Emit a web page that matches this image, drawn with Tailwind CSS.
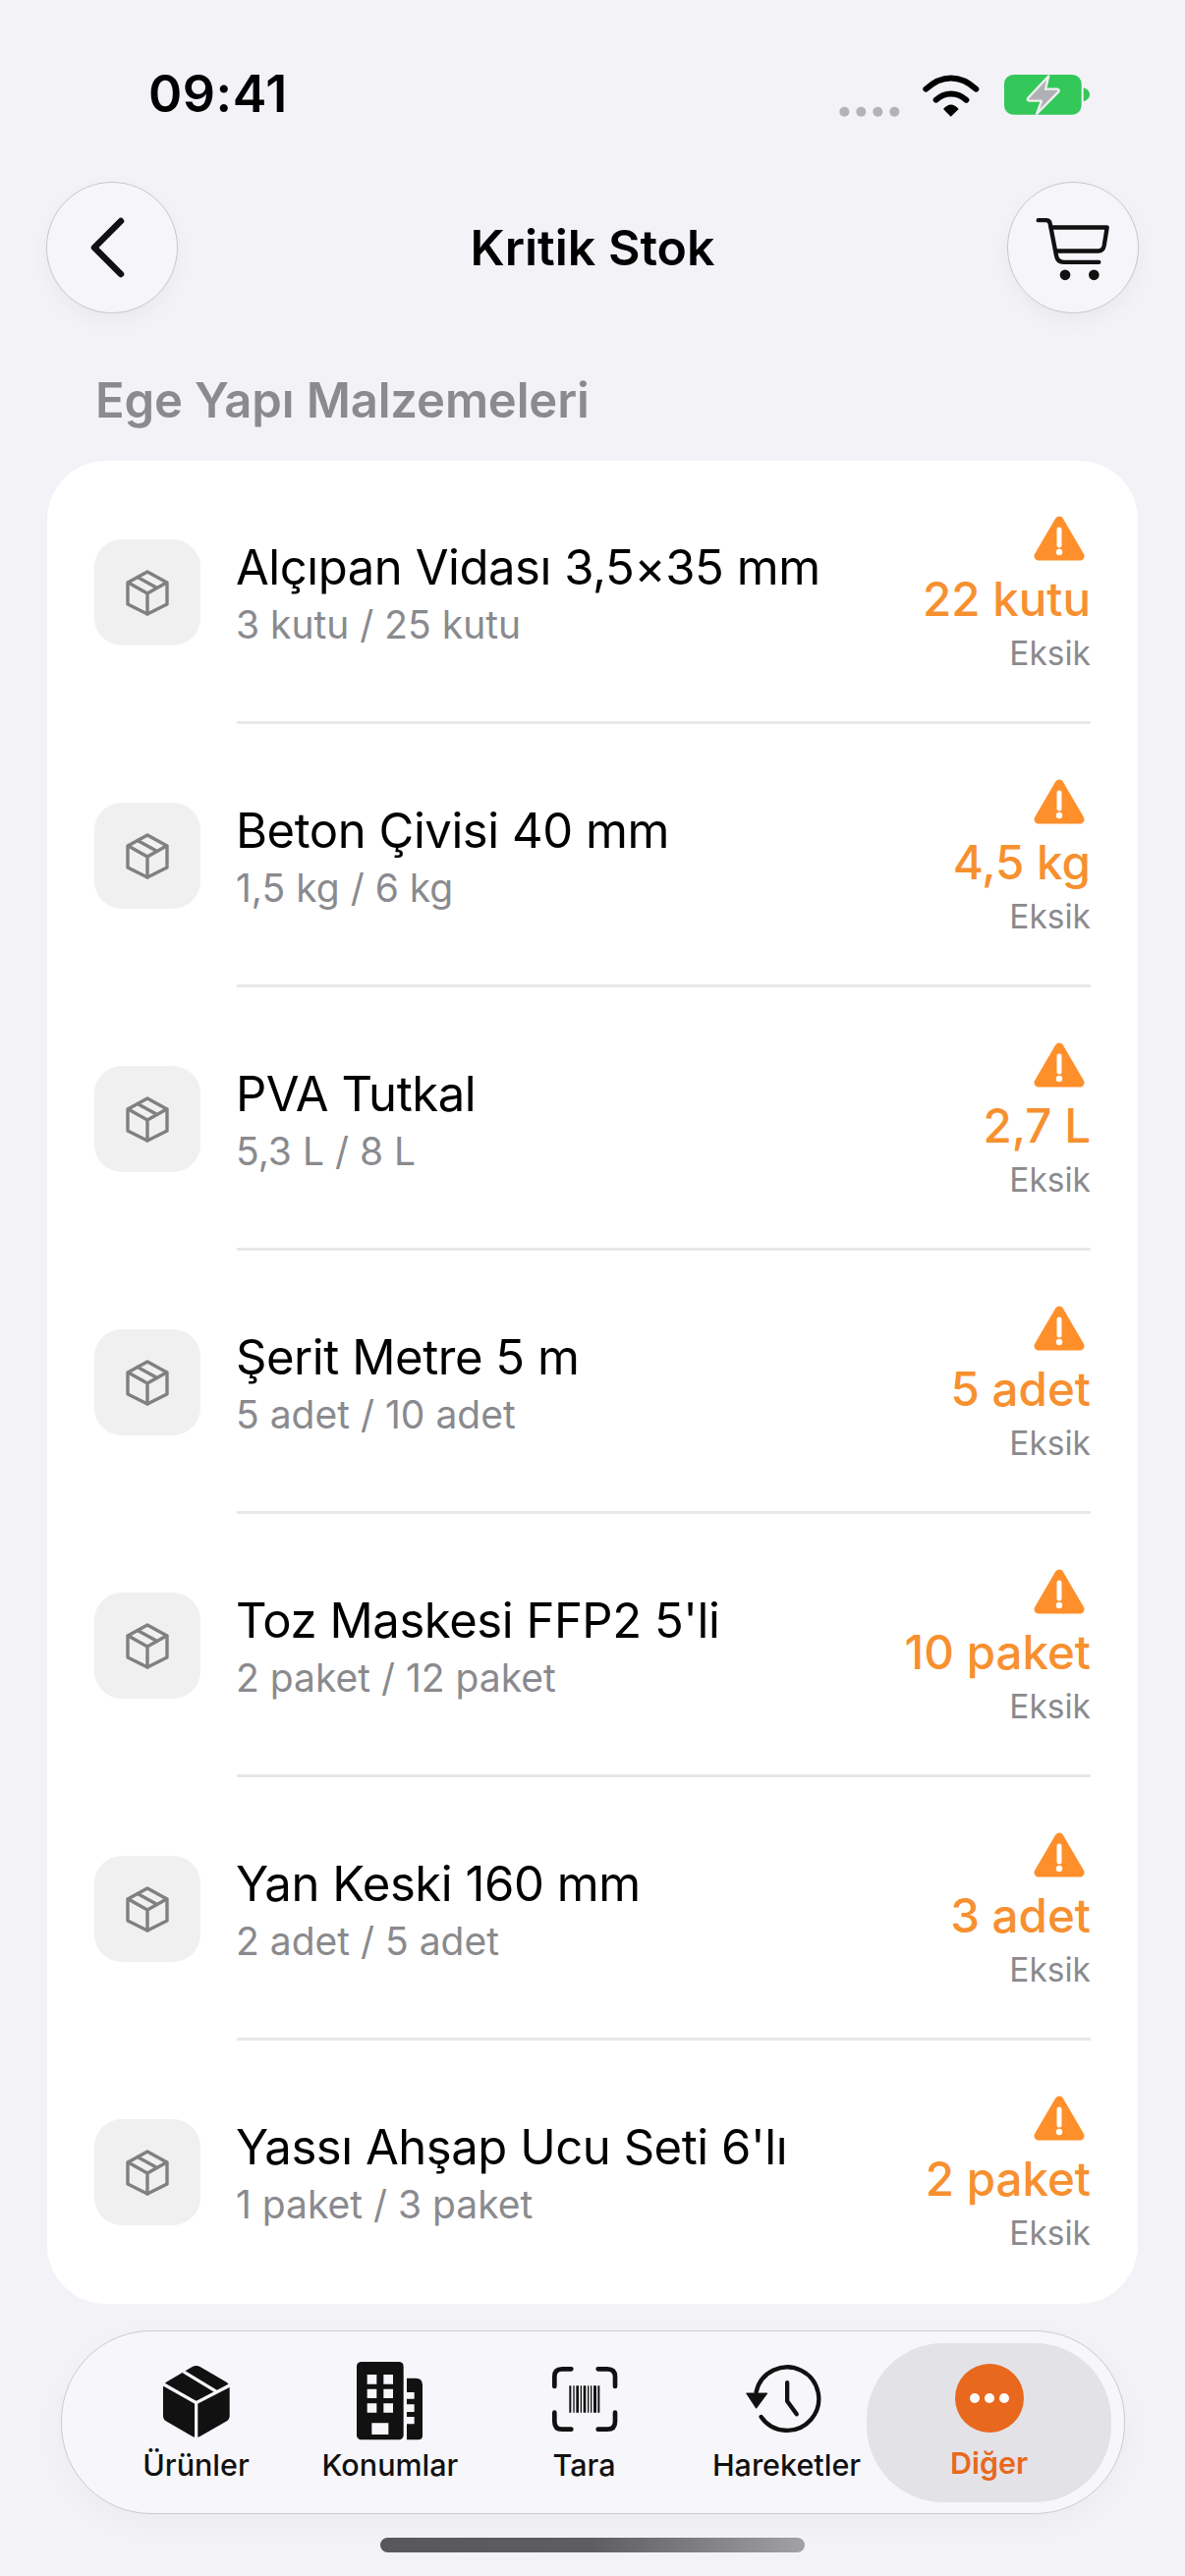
<!DOCTYPE html>
<html lang="tr">
<head>
<meta charset="utf-8">
<script src="https://cdn.jsdelivr.net/npm/@tailwindcss/browser@4"></script>
</head>
<body class="m-0">
<div class="w-[1206px] h-[2622px] overflow-hidden bg-[#f2f2f7] flex flex-col font-['Inter','Liberation_Sans',sans-serif] text-black">

  <!-- status bar -->
  <div class="h-[185px] flex items-start justify-between pl-[151px] pr-[95px] shrink-0">
    <div class="mt-[61px] text-[52px] leading-[70px] font-semibold tracking-[0.5px]">09:41</div>
    <svg class="mt-[74px]" width="257" height="50" viewBox="42 72 771 150" fill="none">
      <circle cx="58" cy="191" r="15" fill="#b3b3b6"/><circle cx="109" cy="191" r="15" fill="#b3b3b6"/><circle cx="160" cy="191" r="15" fill="#b3b3b6"/><circle cx="211" cy="191" r="15" fill="#b3b3b6"/>
      <path d="M307 122C355 77 412 77 460 122" stroke="#000" stroke-width="18" stroke-linecap="round"/>
      <path d="M338 155C365 130 402 130 430 155" stroke="#000" stroke-width="18" stroke-linecap="round"/>
      <path d="M360 183C375 165 392 165 407 183L383 206Z" fill="#000"/>
      <rect x="546" y="78" width="236" height="122" rx="28" fill="#34c759"/>
      <path d="M788 118C800 122 807 130 807 139C807 148 800 156 788 160Z" fill="#34c759"/>
      <path d="M682 82L618 150Q615 158 625 158L660 158L645 198L712 130Q716 122 706 122L672 122Z" fill="#b1b1b5" stroke="#eef0f0" stroke-width="7" stroke-linejoin="round"/>
    </svg>
  </div>

  <!-- header -->
  <div class="h-[134px] px-[47px] flex items-center justify-between shrink-0">
    <div class="w-[134px] h-[134px] rounded-full bg-[#f6f6fa] border-[1.5px] border-[#c8c8cc] shadow-[0_8px_20px_rgba(0,0,0,0.04)] flex items-center justify-center">
      <svg class="mr-[10px]" width="40" height="62" viewBox="0 0 40 62" fill="none"><path d="M34 4L7 31L34 58" stroke="#111" stroke-width="6.5" stroke-linecap="round" stroke-linejoin="round"/></svg>
    </div>
    <div class="text-[50px] leading-[64px] font-semibold">Kritik Stok</div>
    <div class="w-[134px] h-[134px] rounded-full bg-[#f6f6fa] border-[1.5px] border-[#c8c8cc] shadow-[0_8px_20px_rgba(0,0,0,0.04)] flex items-center justify-center">
      <svg class="mt-[2px]" width="75" height="67" viewBox="640 515 225 200" fill="none">
        <path d="M648 527H672Q682 527 684 537L703 635Q706 655 726 655H833" stroke="#111" stroke-width="13" stroke-linecap="round" stroke-linejoin="round"/>
        <path d="M687 549H858L849 605Q846 621 830 621H702" stroke="#111" stroke-width="13" stroke-linecap="round" stroke-linejoin="round"/>
        <circle cx="730" cy="694" r="16" fill="#111"/><circle cx="818" cy="694" r="16" fill="#111"/>
      </svg>
    </div>
  </div>

  <!-- section label -->
  <div class="h-[150px] pl-[97px] pt-[28px] flex items-center text-[49px] tracking-[-0.15px] font-semibold text-[#8a8a8f] shrink-0">Ege Yapı Malzemeleri</div>

  <!-- list card -->
  <div class="mx-[48px] w-[1110px] h-[1876px] bg-white rounded-[60px] shrink-0 flex flex-col">

    <div class="h-[268px] flex items-center pl-[48px] pr-[48px]">
      <div class="w-[108px] h-[108px] rounded-[28px] bg-[#f0f0f0] flex items-center justify-center shrink-0">
        <svg width="44" height="47" viewBox="0 0 44 47" fill="none" stroke="#808080" stroke-width="3.4" stroke-linejoin="round" stroke-linecap="round"><path d="M22 2L42 13V35L22 45L2 35V13Z"/><path d="M2.5 13L22 24L41.5 13M22 24V45M12 7.5L32 18.5"/></svg>
      </div>
      <div class="ml-[37px] flex-1 h-full border-b-[3px] border-[#e8e8ea] flex items-center justify-between">
        <div class="-ml-[1px] mt-[2px]">
          <div class="text-[49px] leading-[62px] tracking-[-0.45px]">Alçıpan Vidası 3,5×35 mm</div>
          <div class="mt-[4px] text-[39px] leading-[46px] text-[#8a8a8e]">3 kutu / 25 kutu</div>
        </div>
        <div class="flex flex-col items-end mt-[6px]">
          <svg class="mr-[6px]" width="52" height="48" viewBox="0 0 52 48"><path d="M26 5L47 41H5Z" fill="#ff8f2b" stroke="#ff8f2b" stroke-width="9" stroke-linejoin="round"/><path d="M26 14V30" stroke="#fff" stroke-width="5" stroke-linecap="round"/><circle cx="26" cy="37" r="3.2" fill="#fff"/></svg>
          <div class="mt-[10px] text-[47.5px] leading-[54px] font-medium text-[#f7902f]">22 kutu</div>
          <div class="mt-[8px] text-[33.5px] leading-[40px] text-[#8a8a8e]">Eksik</div>
        </div>
      </div>
    </div>

    <div class="h-[268px] flex items-center pl-[48px] pr-[48px]">
      <div class="w-[108px] h-[108px] rounded-[28px] bg-[#f0f0f0] flex items-center justify-center shrink-0">
        <svg width="44" height="47" viewBox="0 0 44 47" fill="none" stroke="#808080" stroke-width="3.4" stroke-linejoin="round" stroke-linecap="round"><path d="M22 2L42 13V35L22 45L2 35V13Z"/><path d="M2.5 13L22 24L41.5 13M22 24V45M12 7.5L32 18.5"/></svg>
      </div>
      <div class="ml-[37px] flex-1 h-full border-b-[3px] border-[#e8e8ea] flex items-center justify-between">
        <div class="-ml-[1px] mt-[2px]">
          <div class="text-[49px] leading-[62px] tracking-[-0.45px]">Beton Çivisi 40 mm</div>
          <div class="mt-[4px] text-[39px] leading-[46px] text-[#8a8a8e]">1,5 kg / 6 kg</div>
        </div>
        <div class="flex flex-col items-end mt-[6px]">
          <svg class="mr-[6px]" width="52" height="48" viewBox="0 0 52 48"><path d="M26 5L47 41H5Z" fill="#ff8f2b" stroke="#ff8f2b" stroke-width="9" stroke-linejoin="round"/><path d="M26 14V30" stroke="#fff" stroke-width="5" stroke-linecap="round"/><circle cx="26" cy="37" r="3.2" fill="#fff"/></svg>
          <div class="mt-[10px] text-[47.5px] leading-[54px] font-medium text-[#f7902f]">4,5 kg</div>
          <div class="mt-[8px] text-[33.5px] leading-[40px] text-[#8a8a8e]">Eksik</div>
        </div>
      </div>
    </div>

    <div class="h-[268px] flex items-center pl-[48px] pr-[48px]">
      <div class="w-[108px] h-[108px] rounded-[28px] bg-[#f0f0f0] flex items-center justify-center shrink-0">
        <svg width="44" height="47" viewBox="0 0 44 47" fill="none" stroke="#808080" stroke-width="3.4" stroke-linejoin="round" stroke-linecap="round"><path d="M22 2L42 13V35L22 45L2 35V13Z"/><path d="M2.5 13L22 24L41.5 13M22 24V45M12 7.5L32 18.5"/></svg>
      </div>
      <div class="ml-[37px] flex-1 h-full border-b-[3px] border-[#e8e8ea] flex items-center justify-between">
        <div class="-ml-[1px] mt-[2px]">
          <div class="text-[49px] leading-[62px] tracking-[-0.45px]">PVA Tutkal</div>
          <div class="mt-[4px] text-[39px] leading-[46px] text-[#8a8a8e]">5,3 L / 8 L</div>
        </div>
        <div class="flex flex-col items-end mt-[6px]">
          <svg class="mr-[6px]" width="52" height="48" viewBox="0 0 52 48"><path d="M26 5L47 41H5Z" fill="#ff8f2b" stroke="#ff8f2b" stroke-width="9" stroke-linejoin="round"/><path d="M26 14V30" stroke="#fff" stroke-width="5" stroke-linecap="round"/><circle cx="26" cy="37" r="3.2" fill="#fff"/></svg>
          <div class="mt-[10px] text-[47.5px] leading-[54px] font-medium text-[#f7902f]">2,7 L</div>
          <div class="mt-[8px] text-[33.5px] leading-[40px] text-[#8a8a8e]">Eksik</div>
        </div>
      </div>
    </div>

    <div class="h-[268px] flex items-center pl-[48px] pr-[48px]">
      <div class="w-[108px] h-[108px] rounded-[28px] bg-[#f0f0f0] flex items-center justify-center shrink-0">
        <svg width="44" height="47" viewBox="0 0 44 47" fill="none" stroke="#808080" stroke-width="3.4" stroke-linejoin="round" stroke-linecap="round"><path d="M22 2L42 13V35L22 45L2 35V13Z"/><path d="M2.5 13L22 24L41.5 13M22 24V45M12 7.5L32 18.5"/></svg>
      </div>
      <div class="ml-[37px] flex-1 h-full border-b-[3px] border-[#e8e8ea] flex items-center justify-between">
        <div class="-ml-[1px] mt-[2px]">
          <div class="text-[49px] leading-[62px] tracking-[-0.45px]">Şerit Metre 5 m</div>
          <div class="mt-[4px] text-[39px] leading-[46px] text-[#8a8a8e]">5 adet / 10 adet</div>
        </div>
        <div class="flex flex-col items-end mt-[6px]">
          <svg class="mr-[6px]" width="52" height="48" viewBox="0 0 52 48"><path d="M26 5L47 41H5Z" fill="#ff8f2b" stroke="#ff8f2b" stroke-width="9" stroke-linejoin="round"/><path d="M26 14V30" stroke="#fff" stroke-width="5" stroke-linecap="round"/><circle cx="26" cy="37" r="3.2" fill="#fff"/></svg>
          <div class="mt-[10px] text-[47.5px] leading-[54px] font-medium text-[#f7902f]">5 adet</div>
          <div class="mt-[8px] text-[33.5px] leading-[40px] text-[#8a8a8e]">Eksik</div>
        </div>
      </div>
    </div>

    <div class="h-[268px] flex items-center pl-[48px] pr-[48px]">
      <div class="w-[108px] h-[108px] rounded-[28px] bg-[#f0f0f0] flex items-center justify-center shrink-0">
        <svg width="44" height="47" viewBox="0 0 44 47" fill="none" stroke="#808080" stroke-width="3.4" stroke-linejoin="round" stroke-linecap="round"><path d="M22 2L42 13V35L22 45L2 35V13Z"/><path d="M2.5 13L22 24L41.5 13M22 24V45M12 7.5L32 18.5"/></svg>
      </div>
      <div class="ml-[37px] flex-1 h-full border-b-[3px] border-[#e8e8ea] flex items-center justify-between">
        <div class="-ml-[1px] mt-[2px]">
          <div class="text-[49px] leading-[62px] tracking-[-0.45px]">Toz Maskesi FFP2 5'li</div>
          <div class="mt-[4px] text-[39px] leading-[46px] text-[#8a8a8e]">2 paket / 12 paket</div>
        </div>
        <div class="flex flex-col items-end mt-[6px]">
          <svg class="mr-[6px]" width="52" height="48" viewBox="0 0 52 48"><path d="M26 5L47 41H5Z" fill="#ff8f2b" stroke="#ff8f2b" stroke-width="9" stroke-linejoin="round"/><path d="M26 14V30" stroke="#fff" stroke-width="5" stroke-linecap="round"/><circle cx="26" cy="37" r="3.2" fill="#fff"/></svg>
          <div class="mt-[10px] text-[47.5px] leading-[54px] font-medium text-[#f7902f]">10 paket</div>
          <div class="mt-[8px] text-[33.5px] leading-[40px] text-[#8a8a8e]">Eksik</div>
        </div>
      </div>
    </div>

    <div class="h-[268px] flex items-center pl-[48px] pr-[48px]">
      <div class="w-[108px] h-[108px] rounded-[28px] bg-[#f0f0f0] flex items-center justify-center shrink-0">
        <svg width="44" height="47" viewBox="0 0 44 47" fill="none" stroke="#808080" stroke-width="3.4" stroke-linejoin="round" stroke-linecap="round"><path d="M22 2L42 13V35L22 45L2 35V13Z"/><path d="M2.5 13L22 24L41.5 13M22 24V45M12 7.5L32 18.5"/></svg>
      </div>
      <div class="ml-[37px] flex-1 h-full border-b-[3px] border-[#e8e8ea] flex items-center justify-between">
        <div class="-ml-[1px] mt-[2px]">
          <div class="text-[49px] leading-[62px] tracking-[-0.45px]">Yan Keski 160 mm</div>
          <div class="mt-[4px] text-[39px] leading-[46px] text-[#8a8a8e]">2 adet / 5 adet</div>
        </div>
        <div class="flex flex-col items-end mt-[6px]">
          <svg class="mr-[6px]" width="52" height="48" viewBox="0 0 52 48"><path d="M26 5L47 41H5Z" fill="#ff8f2b" stroke="#ff8f2b" stroke-width="9" stroke-linejoin="round"/><path d="M26 14V30" stroke="#fff" stroke-width="5" stroke-linecap="round"/><circle cx="26" cy="37" r="3.2" fill="#fff"/></svg>
          <div class="mt-[10px] text-[47.5px] leading-[54px] font-medium text-[#f7902f]">3 adet</div>
          <div class="mt-[8px] text-[33.5px] leading-[40px] text-[#8a8a8e]">Eksik</div>
        </div>
      </div>
    </div>

    <div class="h-[268px] flex items-center pl-[48px] pr-[48px]">
      <div class="w-[108px] h-[108px] rounded-[28px] bg-[#f0f0f0] flex items-center justify-center shrink-0">
        <svg width="44" height="47" viewBox="0 0 44 47" fill="none" stroke="#808080" stroke-width="3.4" stroke-linejoin="round" stroke-linecap="round"><path d="M22 2L42 13V35L22 45L2 35V13Z"/><path d="M2.5 13L22 24L41.5 13M22 24V45M12 7.5L32 18.5"/></svg>
      </div>
      <div class="ml-[37px] flex-1 h-full border-b-[3px] border-transparent flex items-center justify-between">
        <div class="-ml-[1px] mt-[2px]">
          <div class="text-[49px] leading-[62px] tracking-[-0.45px]">Yassı Ahşap Ucu Seti 6'lı</div>
          <div class="mt-[4px] text-[39px] leading-[46px] text-[#8a8a8e]">1 paket / 3 paket</div>
        </div>
        <div class="flex flex-col items-end mt-[6px]">
          <svg class="mr-[6px]" width="52" height="48" viewBox="0 0 52 48"><path d="M26 5L47 41H5Z" fill="#ff8f2b" stroke="#ff8f2b" stroke-width="9" stroke-linejoin="round"/><path d="M26 14V30" stroke="#fff" stroke-width="5" stroke-linecap="round"/><circle cx="26" cy="37" r="3.2" fill="#fff"/></svg>
          <div class="mt-[10px] text-[47.5px] leading-[54px] font-medium text-[#f7902f]">2 paket</div>
          <div class="mt-[8px] text-[33.5px] leading-[40px] text-[#8a8a8e]">Eksik</div>
        </div>
      </div>
    </div>
  </div>

  <!-- tab bar -->
  <div class="mt-[27px] mx-[62px] w-[1083px] h-[187px] rounded-[92px] bg-[#f7f7fb] border-[1.5px] border-[#cbcbd0] shadow-[0_10px_30px_rgba(0,0,0,0.03)] pl-[38px] flex items-center shrink-0 text-[#111] text-[30.5px] leading-[38px] font-medium">
    <div class="w-[197px] flex flex-col items-center">
      <svg class="h-[80px] mb-[6px]" width="70" height="80" viewBox="132 75 214 240" fill="none">
        <path d="M238 85Q244 85 250 88L330 135Q342 142 342 155V240Q342 252 332 258L248 306Q238 310 228 306L145 258Q135 252 135 240V155Q135 142 147 135L226 88Q232 85 238 85Z" fill="#111"/>
        <path d="M132 140L238 200L346 144M238 200V312M198 103L300 165" stroke="#f7f7fb" stroke-width="10"/>
      </svg>
      <div>Ürünler</div>
    </div>
    <div class="w-[198px] flex flex-col items-center">
      <svg class="h-[80px] mb-[6px] mr-[2px]" width="67" height="80" viewBox="727 75 201 240">
        <rect x="727" y="75" width="143" height="238" rx="14" fill="#111"/>
        <path d="M880 125H908Q928 125 928 145V300Q928 313 915 313H880Z" fill="#111"/>
        <path d="M880 168H903V188H880ZM880 205H903V228H880ZM880 243H903V265H880Z" fill="#f7f7fb"/>
        <path d="M759 114H788V143H759ZM809 114H838V143H809ZM759 158H788V186H759ZM809 158H838V186H809ZM759 202H788V230H759ZM809 202H838V230H809ZM773 262H824V297H773Z" fill="#f7f7fb"/>
      </svg>
      <div>Konumlar</div>
    </div>
    <div class="w-[197px] flex flex-col items-center">
      <svg class="h-[80px] mb-[6px]" width="68" height="80" viewBox="120 80 204 240" fill="none">
        <g stroke="#111" stroke-width="14" stroke-linecap="round" stroke-linejoin="round">
          <path d="M130 155V125Q130 102 153 102H181"/><path d="M263 102H291Q315 102 315 125V155"/>
          <path d="M130 235V262Q130 286 153 286H181"/><path d="M315 235V262Q315 286 291 286H263"/>
        </g>
        <path d="M175 153h6v82h-6zM187 153h4v82h-4zM196 153h8v82h-8zM209 153h4v82h-4zM218 153h8v82h-8zM231 153h4v82h-4zM240 153h4v82h-4zM249 153h9v82h-9zM262 153h6v82h-6z" fill="#111"/>
      </svg>
      <div>Tara</div>
    </div>
    <div class="w-[189px] pl-[26px] flex flex-col items-center">
      <svg class="h-[80px] mb-[6px] mr-[6px]" width="77" height="80" viewBox="716 80 232 240" fill="none">
        <path d="M763 248A97 97 0 1 0 748 172" stroke="#111" stroke-width="13" stroke-linecap="round"/>
        <path d="M718 176H782L748 222Z" fill="#111" stroke="#111" stroke-width="3" stroke-linejoin="round"/>
        <path d="M843 143V200L872 240" stroke="#111" stroke-width="13" stroke-linecap="round" stroke-linejoin="round"/>
      </svg>
      <div>Hareketler</div>
    </div>
    <div class="w-[249px] h-[162px] rounded-[78px] bg-[#e3e3e7] flex flex-col items-center justify-center text-[#e8681e] font-semibold">
      <div class="w-[70px] h-[70px] rounded-full bg-[#e8681e] flex items-center justify-center gap-[5px] mb-[11px] -mt-[1px]">
        <span class="w-[10px] h-[10px] rounded-full bg-white"></span><span class="w-[10px] h-[10px] rounded-full bg-white"></span><span class="w-[10px] h-[10px] rounded-full bg-white"></span>
      </div>
      <div class="translate-y-[1px]">Diğer</div>
    </div>
  </div>

  <!-- home indicator -->
  <div class="mt-[24px] mx-auto w-[432px] h-[15px] rounded-full bg-gradient-to-r from-[#58585c] via-[#5e5e62] to-[#a2a2a6] shrink-0"></div>
</div>
</body>
</html>
